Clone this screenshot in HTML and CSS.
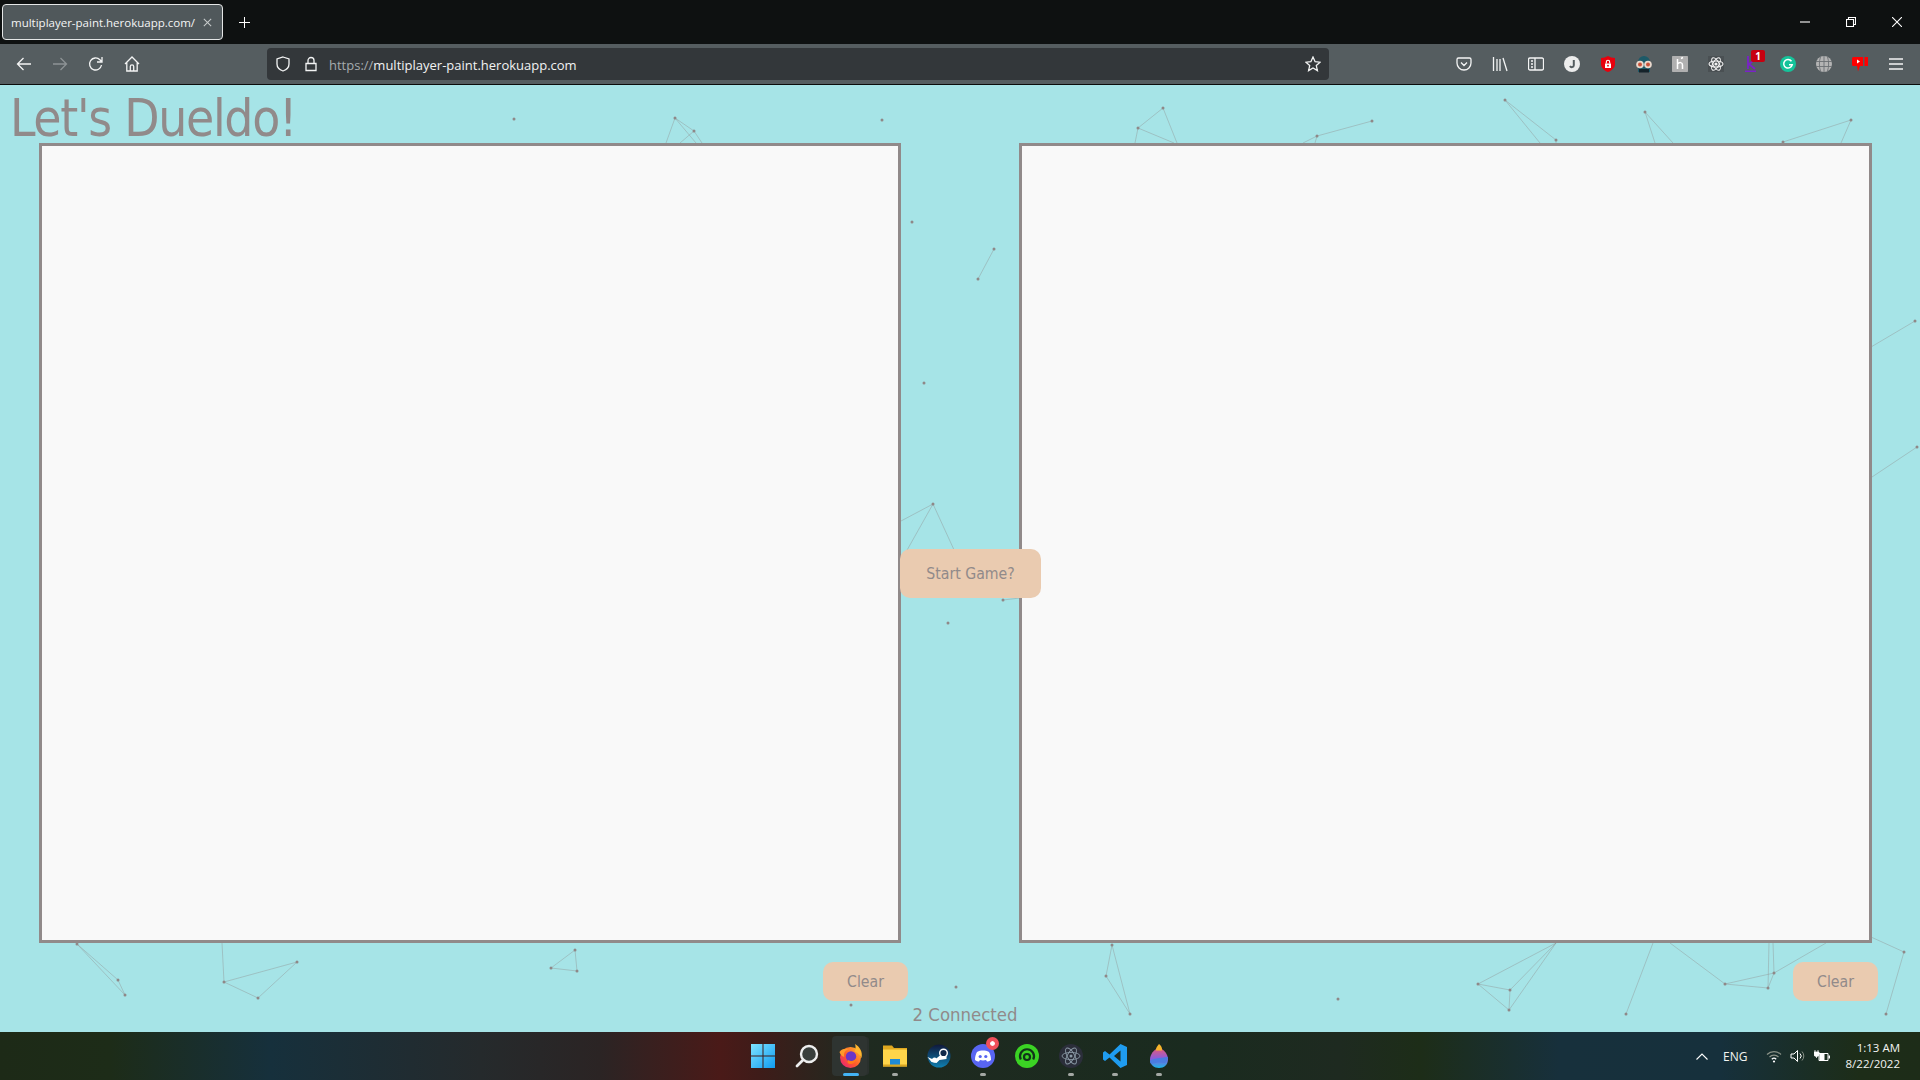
FILE: index.html
```html
<!DOCTYPE html>
<html lang="en">
<head>
<meta charset="utf-8">
<title>multiplayer-paint.herokuapp.com/</title>
<link rel="stylesheet" href="styles.css">
</head>
<body>
<div class="window">
  <header class="tabbar">
    <div class="tab">
      <span class="tab-title">multiplayer-paint.herokuapp.com/</span>
      <svg class="ic12" viewBox="0 0 12 12"><path d="M2 2l8 8M10 2l-8 8" class="st-light"/></svg>
    </div>
    <svg class="newtab" viewBox="0 0 12 12"><path d="M6 0v12M0 6h12" class="st-white"/></svg>
    <div class="winctl">
      <span class="winbtn"><svg class="ic10" viewBox="0 0 10 10"><path d="M0 5h10" class="st-white"/></svg></span>
      <span class="winbtn"><svg class="ic10" viewBox="0 0 10 10"><path d="M.5 2.500h7v7h-7zM2.500 2.500V.5h7v7h-2" class="st-white"/></svg></span>
      <span class="winbtn"><svg class="ic10" viewBox="0 0 10 10"><path d="M0 0l10 10M10 0L0 10" class="st-white"/></svg></span>
    </div>
  </header>

  <nav class="toolbar">
    <span class="tbtn"><svg class="ic16" viewBox="0 0 16 16"><path d="M15 8H1.500M7.500 2l-6 6 6 6" class="st-icon"/></svg></span>
    <span class="tbtn"><svg class="ic16" viewBox="0 0 16 16"><path d="M1 8h13.500M8.500 2l6 6-6 6" class="st-dim"/></svg></span>
    <span class="tbtn"><svg class="ic16" viewBox="0 0 16 16"><path d="M13.500 9a6 6 0 1 1-1.600-5.200L14 6M14 1v5H9" class="st-icon"/></svg></span>
    <span class="tbtn btn-home"><svg class="ic16" viewBox="0 0 16 16"><path d="M1 8l7-7 7 7M2.800 6.500V15h10.400V6.500M6.300 15v-4.500a1.700 1.700 0 0 1 3.400 0V15" class="st-icon"/></svg></span>
    <div class="urlbar">
      <svg class="ic16 url-shield" viewBox="0 0 16 16"><path d="M8 1l6 2v5c0 3.500-2.500 5.800-6 7-3.500-1.200-6-3.500-6-7V3z" class="st-icon"/></svg>
      <svg class="ic16 url-lock" viewBox="0 0 16 16"><path d="M3 7.500h10v7H3zM5 7.500V4.500a3 3 0 0 1 6 0v3" class="st-icon"/></svg>
      <span class="url"><span class="url-scheme">https://</span>multiplayer-paint.herokuapp.com</span>
      <svg class="ic16 url-star" viewBox="0 0 16 16"><path d="M8 1l2.100 4.700 5 .5-3.800 3.400 1.100 5L8 12l-4.400 2.600 1.100-5L.9 6.200l5-.5z" class="st-icon"/></svg>
    </div>
    <div class="exts">
      <span class="tbtn"><svg class="ic16" viewBox="0 0 16 16"><path d="M2.500 2h11A1.500 1.500 0 0 1 15 3.500V7a7 7 0 0 1-14 0V3.500A1.500 1.500 0 0 1 2.500 2zM5 6.500l3 3 3-3" class="st-icon"/></svg></span>
      <span class="tbtn"><svg class="ic16" viewBox="0 0 16 16"><path d="M1.500 1v14M5 3v12M8 3v12M11 2l4 13" class="st-icon"/></svg></span>
      <span class="tbtn"><svg class="ic16" viewBox="0 0 16 16"><path d="M2 2h12a1.500 1.500 0 0 1 1.500 1.500v9A1.500 1.500 0 0 1 14 14H2a1.500 1.500 0 0 1-1.500-1.500v-9A1.500 1.500 0 0 1 2 2zM7 2v12M3 5h2M3 8h2M3 11h2" class="st-icon"/></svg></span>
      <span class="tbtn"><svg class="ic16" viewBox="0 0 16 16"><circle cx="8" cy="8" r="8" fill="#ececec"/><path d="M9.800 4v5.200a2 2 0 0 1-3.800.8" fill="none" stroke="#555d60" stroke-width="2"/></svg></span>
      <span class="tbtn"><svg class="ic16" viewBox="0 0 16 16"><path d="M8 0c2 1.200 4.500 2 7 2v6c0 3.800-3 6.500-7 8-4-1.500-7-4.200-7-8V2c2.500 0 5-.8 7-2z" fill="#e8000d"/><path d="M5 7.500h6V12H5z" fill="#fff"/><path d="M6.300 7.500V6a1.700 1.700 0 0 1 3.400 0v1.500" fill="none" stroke="#fff" stroke-width="1.100"/><circle cx="8" cy="9.700" r=".9" fill="#e8000d"/></svg></span>
      <span class="tbtn"><svg class="ic-big" viewBox="0 0 18 18"><path d="M3 7a6 6 0 0 1 12 0v10H3z" fill="#1d5a68"/><path d="M4 14h10v3.500H4z" fill="#15232a"/><circle cx="5" cy="9.500" r="3.800" fill="#e8d8cc"/><circle cx="13" cy="9.500" r="3.800" fill="#e8d8cc"/><circle cx="5" cy="9.500" r="2" fill="#c8523a"/><circle cx="13" cy="9.500" r="2" fill="#c8523a"/></svg></span>
      <span class="tbtn"><svg class="ic16" viewBox="0 0 16 16"><rect width="16" height="18" y="-1" rx="2.500" fill="#b0b0b0"/><path d="M5.500 3v10M5.500 8c2-2 5-2 5 1v4M9 2.500l2-1" fill="none" stroke="#fff" stroke-width="1.500"/></svg></span>
      <span class="tbtn"><svg class="ic16" viewBox="0 0 16 16"><rect width="16" height="16" fill="#4a5053"/><g fill="none" stroke="#f2f2f2" stroke-width="1.100"><ellipse cx="8" cy="8" rx="7" ry="3"/><ellipse cx="8" cy="8" rx="7" ry="3" transform="rotate(60 8 8)"/><ellipse cx="8" cy="8" rx="7" ry="3" transform="rotate(120 8 8)"/></g><circle cx="8" cy="8" r="1.600" fill="#f2f2f2"/></svg></span>
      <span class="tbtn"><svg class="ic16" viewBox="0 0 16 16"><path d="M4 0v13M4 9l6-5M5 8l6 5M1 15.500h11" fill="none" stroke="#7a22c8" stroke-width="1.800"/></svg><span class="badge">1</span></span>
      <span class="tbtn"><svg class="ic16" viewBox="0 0 16 16"><circle cx="8" cy="8" r="8" fill="#15c39a"/><path d="M11.500 5.200a4.300 4.300 0 1 0 .7 3.600H9" fill="none" stroke="#fff" stroke-width="1.500"/></svg></span>
      <span class="tbtn"><svg class="ic16" viewBox="0 0 16 16"><circle cx="8" cy="8" r="8" fill="#b4b4b4"/><path d="M0 5.500h16M0 10.500h16M8 0v16M4.500 1c-1.500 4-1.500 10 0 14M11.500 1c1.500 4 1.500 10 0 14" fill="none" stroke="#6c7174" stroke-width=".9"/></svg></span>
      <span class="tbtn"><svg class="ic16" viewBox="0 0 16 16"><path d="M0 2.500Q0 1 1.500 1H11v9H8l-2 5.500-1-5.500H1.500Q0 10 0 8.500zM12.500 1H16v9h-3.500z" fill="#f00"/><path d="M5 3.500l3 2-3 2z" fill="#fff"/></svg></span>
      <span class="tbtn"><svg class="ic16" viewBox="0 0 16 16"><path d="M1 3h14M1 8h14M1 13h14" class="st-icon"/></svg></span>
    </div>
  </nav>

  <main class="page">
    <svg class="particles" viewBox="0 85 1920 947" aria-hidden="true">
      <g class="links">
        <path d="M675 118L666 143M675 118L694 131M675 118L696 143M694 131L680 143M694 131L702 143"/>
        <path d="M1138 128L1135 143M1138 128L1163 108M1163 108L1177 143M1138 128L1174 143"/>
        <path d="M1317 136L1372 121M1317 136L1303 143M1317 136L1315 143"/>
        <path d="M1505 100L1540 143M1505 100L1556 140M1556 140V143"/>
        <path d="M1645 112L1655 143M1645 112L1673 143"/>
        <path d="M1851 120L1783 142M1851 120L1841 143"/>
        <path d="M994 249L978 279"/>
        <path d="M933 504L901 521M933 504L906 552M933 504L955 552M1003 600L1020 598"/>
        <path d="M1915 321L1871 347M1917 447L1872 477"/>
        <path d="M77 944L118 980M77 944L125 995M118 980L125 995"/>
        <path d="M222 943L224 982M224 982L297 962M224 982L258 998M297 962L258 998"/>
        <path d="M575 950L551 968M575 950L577 971M551 968L577 971"/>
        <path d="M1112 945L1106 976M1106 976L1130 1014M1112 945L1130 1014"/>
        <path d="M1556 943L1478 984M1556 943L1510 990M1556 943L1509 1010M1478 984L1510 990M1478 984L1509 1010M1510 990L1509 1010"/>
        <path d="M1653 943L1626 1014M1670 943L1725 984M1725 984L1774 973M1725 984L1768 988M1768 988L1774 973M1769 943L1768 988M1773 943L1774 973M1826 943L1774 973"/>
        <path d="M1904 952L1886 1014M1871 937L1904 952"/>
      </g>
      <g class="nodes">
        <circle cx="514" cy="119" r="1.500"/><circle cx="882" cy="120" r="1.500"/>
        <circle cx="675" cy="118" r="1.500"/><circle cx="694" cy="131" r="1.500"/>
        <circle cx="1138" cy="128" r="1.500"/><circle cx="1163" cy="108" r="1.500"/>
        <circle cx="1317" cy="136" r="1.500"/><circle cx="1372" cy="121" r="1.500"/>
        <circle cx="1505" cy="100" r="1.500"/><circle cx="1556" cy="140" r="1.500"/>
        <circle cx="1645" cy="112" r="1.500"/><circle cx="1851" cy="120" r="1.500"/><circle cx="1783" cy="142" r="1.500"/>
        <circle cx="912" cy="222" r="1.500"/><circle cx="994" cy="249" r="1.500"/><circle cx="978" cy="279" r="1.500"/>
        <circle cx="924" cy="383" r="1.500"/><circle cx="933" cy="504" r="1.500"/><circle cx="1003" cy="600" r="1.500"/><circle cx="948" cy="623" r="1.500"/>
        <circle cx="1915" cy="321" r="1.500"/><circle cx="1917" cy="447" r="1.500"/>
        <circle cx="77" cy="944" r="1.500"/><circle cx="118" cy="980" r="1.500"/><circle cx="125" cy="995" r="1.500"/>
        <circle cx="224" cy="982" r="1.500"/><circle cx="297" cy="962" r="1.500"/><circle cx="258" cy="998" r="1.500"/>
        <circle cx="575" cy="950" r="1.500"/><circle cx="551" cy="968" r="1.500"/><circle cx="577" cy="971" r="1.500"/>
        <circle cx="851" cy="1005" r="1.500"/><circle cx="956" cy="987" r="1.500"/>
        <circle cx="1112" cy="945" r="1.500"/><circle cx="1106" cy="976" r="1.500"/><circle cx="1130" cy="1014" r="1.500"/>
        <circle cx="1338" cy="999" r="1.500"/><circle cx="1478" cy="984" r="1.500"/><circle cx="1510" cy="990" r="1.500"/><circle cx="1509" cy="1010" r="1.500"/>
        <circle cx="1626" cy="1014" r="1.500"/><circle cx="1725" cy="984" r="1.500"/><circle cx="1774" cy="973" r="1.500"/><circle cx="1768" cy="988" r="1.500"/>
        <circle cx="1904" cy="952" r="1.500"/><circle cx="1886" cy="1014" r="1.500"/>
      </g>
    </svg>
    <h1 class="title">Let's Dueldo!</h1>
    <section class="boards">
      <div class="board board-left"></div>
      <div class="middle"><button class="btn btn-start" type="button">Start Game?</button></div>
      <div class="board board-right"></div>
    </section>
    <section class="controls">
      <button class="btn btn-clear" type="button">Clear</button>
      <button class="btn btn-clear" type="button">Clear</button>
    </section>
    <p class="connected">2 Connected</p>
  </main>

  <footer class="taskbar">
    <div class="task-spacer"></div>
    <div class="task-icons">
      <span class="tk"><svg class="ic24" viewBox="0 0 24 24"><defs><linearGradient id="w1" x1="0" y1="0" x2="1" y2="1"><stop offset="0" stop-color="#7fe3ff"/><stop offset="1" stop-color="#0f9bf0"/></linearGradient></defs><path d="M0 0h11.500v11.500H0zM12.500 0H24v11.500H12.500zM0 12.500h11.500V24H0zM12.500 12.500H24V24H12.500z" fill="url(#w1)"/></svg></span>
      <span class="tk"><svg class="ic24" viewBox="0 0 24 24"><circle cx="14" cy="10" r="8" fill="#3a3f3c" stroke="#eee" stroke-width="2.400"/><path d="M8 16l-6 6" stroke="#eee" stroke-width="2.800" stroke-linecap="round"/></svg></span>
      <span class="tk tk-active">
        <svg class="ic24" viewBox="0 0 24 24"><defs><linearGradient id="ff" x1="0" y1="1" x2="1" y2="0"><stop offset="0" stop-color="#e31587"/><stop offset=".45" stop-color="#ff5a2a"/><stop offset="1" stop-color="#ffbd2e"/></linearGradient></defs><circle cx="11.500" cy="13.500" r="10.500" fill="url(#ff)"/><path d="M16 0c5 3 8 8 6.500 14-2-4-5-6-7-6.500 1-2.500 1.500-5 .5-7.500z" fill="#ffb52e"/><circle cx="12" cy="12.500" r="5.200" fill="#6a35c8"/><path d="M.5 8c2-3 6-4 9-2.500-3 .5-5 3-4.200 7.500C3 12.500 1.200 10.500.5 8z" fill="#ff9a2a"/><path d="M9 16c3 2 7 1 8.500-2.500 0 4-3 6.500-6 6.500-2 0-4-1.500-2.500-4z" fill="#ff7a1a"/></svg>
        <i class="pill pill-active"></i>
      </span>
      <span class="tk"><svg class="ic24" viewBox="0 0 24 24"><path d="M0 1.500h9l2 2.500H24v18H0z" fill="#e0a820"/><path d="M0 5.500h24v17H0z" fill="#ffd54a"/><path d="M7 15h10v6H7z" fill="#1f8ad6"/><path d="M0 20.500h24v2H0z" fill="#d9a520"/></svg><i class="pill"></i></span>
      <span class="tk"><svg class="ic24" viewBox="0 0 24 24"><defs><linearGradient id="st" x1="0" y1="0" x2="0" y2="1"><stop offset="0" stop-color="#10183a"/><stop offset="1" stop-color="#0f7fb0"/></linearGradient></defs><circle cx="12" cy="12" r="11.500" fill="url(#st)"/><path d="M.500 13l7 3 6-5 6-3 0 7-7 1-3 3-5-1z" fill="#fff"/><circle cx="16.500" cy="9" r="3.800" fill="#10284a" stroke="#fff" stroke-width="1.400"/><circle cx="7.500" cy="16" r="2.500" fill="#fff"/></svg></span>
      <span class="tk"><svg class="ic24" viewBox="0 0 24 24"><circle cx="12" cy="12" r="12" fill="#5865f2"/><path d="M6 8c2-1.200 4-1.500 6-1.500S16 6.800 18 8c1.300 2.300 2 5 2 8-1.500 1-3 1.600-4 1.600l-1-1.600c-2 .6-4 .6-6 0l-1 1.600c-1 0-2.500-.6-4-1.600 0-3 .7-5.700 2-8z" fill="#fff"/><circle cx="9.200" cy="12.500" r="1.600" fill="#5865f2"/><circle cx="14.800" cy="12.500" r="1.600" fill="#5865f2"/></svg><i class="dot-note"></i><i class="pill"></i></span>
      <span class="tk"><svg class="ic24" viewBox="0 0 24 24"><circle cx="12" cy="12" r="12" fill="#3bd324"/><path d="M5.800 15.500a7 7 0 1 1 12.400 0" fill="none" stroke="#12331a" stroke-width="2.200"/><circle cx="12" cy="13" r="3" fill="none" stroke="#12331a" stroke-width="2.200"/></svg></span>
      <span class="tk"><svg class="ic24" viewBox="0 0 24 24"><circle cx="12" cy="12" r="12" fill="#2b2e3a"/><g fill="none" stroke="#8b9aa6" stroke-width=".9"><ellipse cx="12" cy="12" rx="9" ry="3.600"/><ellipse cx="12" cy="12" rx="9" ry="3.600" transform="rotate(60 12 12)"/><ellipse cx="12" cy="12" rx="9" ry="3.600" transform="rotate(120 12 12)"/></g><circle cx="12" cy="12" r="1.500" fill="#8b9aa6"/></svg><i class="pill"></i></span>
      <span class="tk"><svg class="ic24" viewBox="0 0 24 24"><path d="M17.500 0L24 3v18l-6.500 3L6.500 13.500 2 17 0 15.500V8.500L2 7l4.500 3.500zM17.500 6.500L11 12l6.500 5.500z" fill="#1f9cf0" fill-rule="evenodd"/></svg><i class="pill"></i></span>
      <span class="tk"><svg class="ic-drop" viewBox="0 0 18 24"><defs><linearGradient id="dr" x1="0" y1="0" x2="0" y2="1"><stop offset="0" stop-color="#f05a6a"/><stop offset=".55" stop-color="#8a5cdc"/><stop offset="1" stop-color="#19b6e6"/></linearGradient></defs><path d="M9 3c5 3 9 7 9 12.500 0 5-4 8.500-9 8.500s-9-3.500-9-8.500C0 10 4 6 9 3z" fill="url(#dr)"/><path d="M9 0c2 1.500 3.500 3.500 3 6.500H6C5.500 4 7.500 2 9 0z" fill="#f6b42c"/><path d="M0 17c4-3 10-3 18-4-.2 2.500-1 4.500-3 6-4-1-10-.5-13.500 1C.5 19.500 0 18.500 0 17z" fill="#4a7ce0"/></svg><i class="pill"></i></span>
    </div>
    <div class="tray">
      <svg class="tray-chev" viewBox="0 0 12 7"><path d="M.5 6.500L6 1l5.500 5.500" class="st-white"/></svg>
      <span class="tray-lang">ENG</span>
      <svg class="tray-ic" viewBox="0 0 16 16"><path d="M1 6.500a10 10 0 0 1 14 0M3.500 9a6.500 6.500 0 0 1 9 0" fill="none" stroke="#8a9288" stroke-width="1.200"/><path d="M5.800 11.200a3.200 3.200 0 0 1 4.400 0" fill="none" stroke="#fff" stroke-width="1.300"/><circle cx="8" cy="13.500" r="1.100" fill="#fff"/></svg>
      <svg class="tray-ic" viewBox="0 0 16 16"><path d="M1 6h3l3.500-3.500v11L4 10H1z" fill="none" stroke="#fff"/><path d="M10 5.500a3.500 3.500 0 0 1 0 5" fill="none" stroke="#fff"/><path d="M12 3.500a6.500 6.500 0 0 1 0 9" fill="none" stroke="#8a9288"/></svg>
      <svg class="tray-ic" viewBox="0 0 16 16"><path d="M5 5.500h9v7H5z" fill="none" stroke="#fff"/><path d="M5.500 6h5v6h-5z" fill="#fff"/><path d="M14.500 7.500H16v3h-1.500z" fill="#fff"/><path d="M1 4v-2M4 4V2M0 4h5v2a2.500 2.500 0 0 1-5 0zM2.500 8v2" fill="#fff" stroke="#fff" stroke-width=".8"/></svg>
      <div class="clock"><span>1:13 AM</span><span>8/22/2022</span></div>
    </div>
  </footer>
</div>
</body>
</html>
```

FILE: styles.css
```css
* { box-sizing: border-box; }
html, body { margin: 0; height: 100%; overflow: hidden; }
.window {
  width: 1920px;
  height: 1080px;
  display: grid;
  grid-template-rows: 44px 41px 947px 48px;
  font-family: "Open Sans", "Noto Sans", sans-serif;
}

/* stroke helpers */
.st-white, .st-light, .st-icon, .st-dim { fill: none; stroke-width: 1.100; }
.st-white { stroke: #fff; }
.st-light { stroke: #c8cccc; }
.st-icon { stroke: #f3f4f4; stroke-width: 1.300; }
.st-dim { stroke: #8d9395; stroke-width: 1.300; }
.ic10 { width: 10px; height: 10px; display: block; }
.ic12 { width: 11px; height: 11px; display: block; flex: none; }
.ic16 { width: 16px; height: 16px; display: block; flex: none; }
.ic-big { width: 18px; height: 18px; display: block; }
.ic24 { width: 24px; height: 24px; display: block; }
.ic-drop { width: 18px; height: 24px; display: block; }

/* tab strip */
.tabbar {
  background: #0e1111;
  display: flex;
  align-items: center;
  padding: 0 0 0 2px;
}
.tab {
  width: 221px;
  height: 36px;
  background: #50585b;
  border: 1px solid #e4e6e6;
  border-radius: 4px;
  display: flex;
  align-items: center;
  padding: 0 9px 0 8px;
  justify-content: space-between;
  color: #f4f5f5;
}
.tab-title { font-size: 11.500px; white-space: nowrap; }
.newtab { width: 11px; height: 11px; margin-left: 16px; }
.winctl { margin-left: auto; display: flex; }
.winbtn { width: 46px; height: 44px; display: flex; align-items: center; justify-content: center; }

/* toolbar */
.toolbar {
  background: #555d60;
  border-bottom: 1px solid #0b0c0c;
  display: flex;
  align-items: center;
  padding: 0 6px;
}
.tbtn { width: 36px; height: 36px; display: flex; align-items: center; justify-content: center; position: relative; flex: none; }
.btn-home svg { margin-left: -1px; }
.urlbar {
  margin-left: 117px;
  width: 1062px;
  height: 32px;
  background: #33373a;
  border-radius: 4px;
  display: flex;
  align-items: center;
  padding: 0 8px 0 8px;
  color: #f1f2f2;
}
.url-shield { margin-right: 12px; }
.url-lock { margin-right: 10px; }
.url { font-size: 13px; white-space: nowrap; position: relative; top: 1px; }
.url-scheme { color: #a5abae; }
.url-star { margin-left: auto; }
.exts { margin-left: 117px; display: flex; }
.badge {
  position: absolute;
  top: 4px; left: 17px;
  width: 14px; height: 12px;
  background: #c80010;
  color: #fff;
  border-radius: 2px;
  font-size: 10px;
  font-weight: 700;
  line-height: 12px;
  text-align: center;
}

/* page */
.page {
  position: relative;
  background: #a6e4e7;
  overflow: hidden;
  color: #918a8a;
  font-family: "DejaVu Sans", sans-serif;
  font-stretch: condensed;
}
.particles { position: absolute; inset: 0; width: 100%; height: 100%; }
.links path { fill: none; stroke: #8f8a8a; stroke-opacity: .38; stroke-width: 1; }
.nodes circle { fill: #8f8888; }
.title {
  position: relative;
  margin: 0;
  height: 58px;
  padding-left: 10px;
  font-size: 51px;
  font-weight: 400;
  letter-spacing: -1.300px;
  line-height: 68px;
  white-space: nowrap;
}
.boards { position: relative; display: flex; padding-left: 39px; }
.board {
  height: 800px;
  background: #f9f9f9;
  border: 3px solid #918a8a;
  flex: none;
}
.board-left { width: 862px; }
.board-right { width: 853px; }
.middle { width: 118px; flex: none; display: flex; align-items: center; padding-top: 60px; }
.btn {
  border: 0;
  background: #eacbb0;
  color: #918a8a;
  font: inherit;
  font-stretch: condensed;
  font-size: 15.700px;
  border-radius: 10px;
  padding: 0;
  flex: none;
}
.btn-start { position: relative; width: 141px; height: 49px; margin: 0 -22px 0 -1px; }
.controls {
  position: relative;
  display: flex;
  justify-content: space-between;
  padding: 19px 42px 0 823px;
}
.btn-clear { width: 85px; height: 39px; }
.connected {
  position: relative;
  margin: 2px 0 0;
  padding-left: 10px;
  text-align: center;
  font-size: 18.400px;
  line-height: 24px;
}

/* taskbar */
.taskbar {
  display: grid;
  grid-template-columns: 1fr auto 1fr;
  align-items: center;
  background: linear-gradient(90deg, #1d2a17 0, #1d2c18 110px, #16303c 270px, #252a2c 480px, #2b2424 600px, #4a1a18 720px, #3e1c19 760px, #1f2a20 860px, #1a2b1f 1200px, #1e2a20 1340px, #1d2d18 1420px, #17303c 1560px, #16303c 1720px, #1d2d18 1860px, #1d2c18 1920px);
}
.task-icons { display: flex; position: relative; left: 1px; }
.tk { width: 44px; height: 48px; position: relative; display: flex; align-items: center; justify-content: center; }
.tk-active::before {
  content: "";
  position: absolute;
  top: 4px; left: 3px;
  width: 35px; height: 40px;
  border-radius: 4px;
  background: #2e3431;
  box-shadow: 3px 0 0 -1px #2a302d;
}
.tk-active svg { position: relative; }
.pill {
  position: absolute;
  left: 19px; bottom: 4px;
  width: 6px; height: 3px;
  border-radius: 2px;
  background: #a4a8a4;
}
.pill-active { left: 14px; width: 16px; background: #43b4f5; }
.dot-note {
  position: absolute;
  top: 5px; right: 6px;
  width: 13px; height: 13px;
  border-radius: 50%;
  background: #f0505a;
  border: 4px solid #f0505a;
  box-shadow: inset 0 0 0 3px #fff;
}
.tray { display: flex; align-items: center; justify-content: flex-end; padding-right: 20px; color: #f2f4f2; }
.tray-chev { width: 12px; height: 7px; margin-right: 15px; }
.tray-lang { font-size: 12px; margin-right: 18px; }
.tray-ic { width: 16px; height: 16px; margin-right: 8px; }
.clock { display: flex; flex-direction: column; align-items: flex-end; font-size: 11.500px; line-height: 16px; margin-left: 8px; }
```
